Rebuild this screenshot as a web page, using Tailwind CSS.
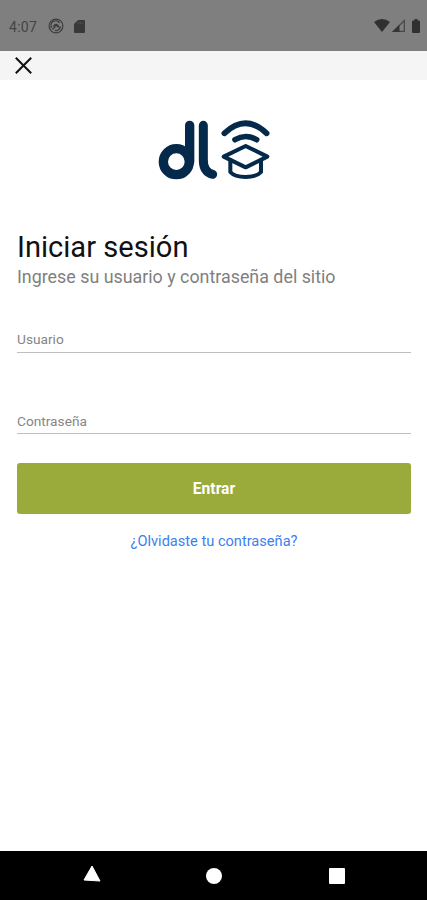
<!DOCTYPE html>
<html lang="es">

<head>
    <meta charset="UTF-8">
    <meta name="viewport" content="width=device-width, initial-scale=1.0">
    <script src="https://cdn.jsdelivr.net/npm/@tailwindcss/browser@4"></script>
    <title>Iniciar sesión</title>
</head>

<body class="bg-white font-['Roboto',sans-serif]">
    <div class="flex flex-col h-[900px] w-[427px] overflow-hidden">
        <!-- status bar -->
        <div class="flex items-center h-[51px] pt-[2px] pl-[9px] pr-[7px] bg-[#7f7f7f] text-[#444444] shrink-0">
            <span id="clock" class="text-[14px] tracking-[0.3px] w-[39px] pt-[1px]">4:07</span>
            <svg class="w-4 h-4 -mt-[1px]" viewBox="0 0 16 16" fill="none" stroke="#3d3d3d">
                <circle cx="8" cy="8" r="6.9" stroke-width="1.2" />
                <path d="M3.8 10A4.6 4.6 0 0 1 11.5 4.8M12.5 8.5A4.5 4.5 0 0 1 7 12.4" stroke-width="1.2" />
                <path d="M5 8Q7 4.5 10 6.5L12.3 10L9.5 9.2L8 8L6.5 10Z" fill="#3d3d3d" stroke="none" />
                <path d="M4.5 11.5L7 9" stroke-width="1.2" />
            </svg>
            <svg class="w-[11px] h-[13px] ml-[10px] -mt-[1px]" viewBox="0 0 11 13">
                <path d="M4 0H10Q11 0 11 1V12Q11 13 10 13H1Q0 13 0 12V4Z" fill="#383838" />
                <path d="M4.3 1.8V4M6.3 1.8V4M8.3 1.8V4" stroke="#555555" stroke-width="0.8" />
            </svg>
            <div class="flex items-center ml-auto -mt-[2px]">
                <svg class="w-4 h-[13px]" viewBox="0 0 16 13">
                    <path d="M0 3Q8 -3 16 3L8 13Z" fill="#303030" />
                </svg>
                <svg class="w-[13px] h-[13px] ml-[2px]" viewBox="0 0 13 13">
                    <path d="M1.5 12.3L12.3 1.5V12.3Z" fill="none" stroke="#484848" stroke-width="1.2" />
                    <path d="M0 13L7.5 5.5V13Z" fill="#353535" />
                </svg>
                <svg class="w-[8px] h-[14px] ml-[7px]" viewBox="0 0 8 14">
                    <path d="M2.5 0H5.5V1.5H7Q8 1.5 8 2.5V13Q8 14 7 14H1Q0 14 0 13V2.5Q0 1.5 1 1.5H2.5Z" fill="#303030" />
                </svg>
            </div>
        </div>

        <!-- header with close button -->
        <header class="flex h-[29px] pl-[15px] pt-[6px] bg-[#f5f5f5] shrink-0">
            <button class="block w-[17px] h-[17px]" aria-label="Cerrar">
                <svg class="w-[17px] h-[17px]" viewBox="0 0 17 17">
                    <path d="M0.8 0.8L16.2 16.2M16.2 0.8L0.8 16.2" stroke="#111111" stroke-width="2" />
                </svg>
            </button>
        </header>

        <main class="flex flex-col grow pl-[17px] pr-[16px]">
            <svg class="w-[130px] h-[80px] mt-[30px] ml-[133px]" viewBox="0 0 390 240" fill="none" stroke="#04294a" stroke-linecap="round" stroke-linejoin="round">
                <circle cx="79" cy="155" r="39" stroke-width="28" />
                <path d="M119 46V155" stroke-width="28" />
                <path d="M160 46V150Q160 186 188 193" stroke-width="27" />
                <path d="M223 70Q287 10 350 70M255 89Q287 70 320 89" stroke-width="17" />
                <path d="M221 140L287 108L352 140L287 172Z" stroke-width="12" />
                <path d="M241 151V186Q254 201 287 201Q320 201 333 186V151" stroke-width="12" />
            </svg>

            <h1 class="mt-[40px] text-[29.1px] leading-[34px] text-[#111111]">Iniciar sesión</h1>
            <p class="mt-[2px] text-[17.85px] leading-[22px] text-[#808080]">Ingrese su usuario y contraseña del sitio</p>

            <div class="mt-[40px] h-[25px] border-b border-[#bebebe]">
                <label class="block text-[13.7px] leading-[23px] text-[#858585]">Usuario</label>
            </div>
            <div class="mt-[56px] h-[25px] border-b border-[#bebebe]">
                <label class="block text-[13.7px] leading-[24px] text-[#858585]">Contraseña</label>
            </div>

            <button class="mt-[29px] h-[51px] shrink-0 rounded-[3px] bg-[#9aab3c] pt-[3px] text-[15.6px] font-bold text-white">Entrar</button>
            <a href="#" class="mt-[17px] text-center text-[14.6px] leading-[20px] text-[#3c80ee]">¿Olvidaste tu contraseña?</a>
        </main>

        <!-- navigation bar -->
        <nav class="flex h-[49px] bg-black shrink-0 pl-[83px]">
            <svg class="w-[18px] h-[17px] mt-[14px]" viewBox="0 0 18 17">
                <path d="M9 1L17 16L1 15Z" fill="#fff" stroke="#fff" stroke-linejoin="round" />
            </svg>
            <div class="w-4 h-4 mt-[16.5px] ml-[105px] rounded-full bg-white"></div>
            <div class="w-4 h-4 mt-[16.5px] ml-[107px] rounded-[1px] bg-white"></div>
        </nav>
    </div>
</body>

</html>
